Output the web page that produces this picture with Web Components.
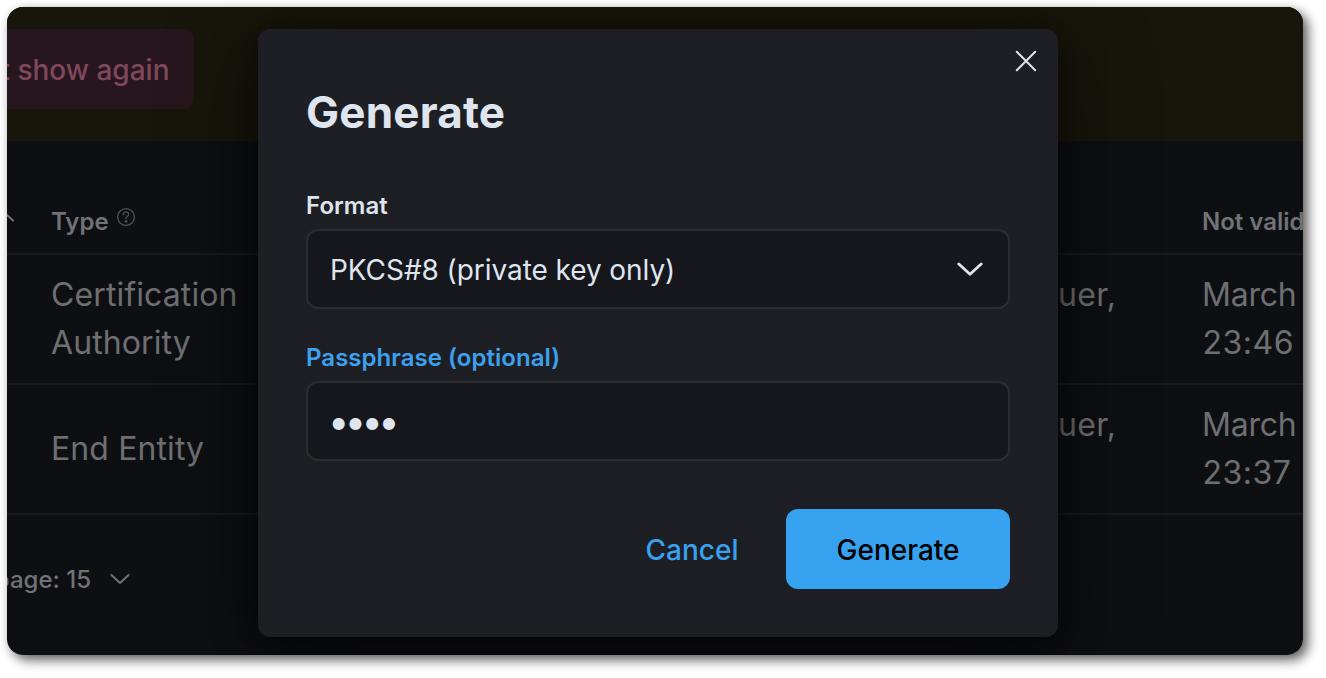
<!DOCTYPE html>
<html lang="en">
<head>
<meta charset="utf-8">
<title>Generate</title>
<style>
body{margin:0;width:1326px;height:678px;overflow:hidden;background:#fff;font-family:Inter,"Liberation Sans",sans-serif}
</style>
</head>
<body>
<app-window>
  <notice-banner>t show again</notice-banner>
  <cert-table></cert-table>
  <page-size>page: 15</page-size>
  <modal-dialog slot="modal" heading="Generate">
    <form-field label="Format"><select-box>PKCS#8 (private key only)</select-box></form-field>
    <form-field label="Passphrase (optional)" active><secret-box>••••</secret-box></form-field>
    <action-button slot="actions" plain>Cancel</action-button>
    <action-button slot="actions">Generate</action-button>
  </modal-dialog>
</app-window>
<script>
function define(name, html) {
  const t = document.createElement('template');
  t.innerHTML = html;
  customElements.define(name, class extends HTMLElement {
    constructor() {
      super();
      this.attachShadow({mode: 'open'}).append(t.content.cloneNode(true));
    }
    connectedCallback() {
      this.shadowRoot.querySelectorAll('[data-attr]').forEach(e => {
        e.textContent = this.getAttribute(e.dataset.attr);
      });
    }
  });
}

define('app-window', `<style>
:host{display:block;padding:7px 0 0 7px}
.frame{position:relative;width:1296px;height:648px;border-radius:16px;box-shadow:5px 5px 12px rgba(0,0,0,.62),0 0 8px rgba(0,0,0,.06)}
.clip{width:100%;height:100%;border-radius:16px;overflow:hidden;background:#0e0f13;display:flex;flex-direction:column;position:relative}
.overlay{position:absolute;left:251px;top:22px}
</style>
<div class="frame"><div class="clip"><slot></slot><div class="overlay"><slot name="modal"></slot></div></div></div>`);

define('notice-banner', `<style>
:host{display:flex;align-items:flex-start;height:134px;box-sizing:border-box;padding-top:22px;background:#18160b}
.btn{display:flex;align-items:center;justify-content:flex-end;width:187px;height:80px;box-sizing:border-box;padding:2px 24.500px 0 0;border-radius:0 10px 10px 0;background:#27161e;color:#80475f;font-size:28px;font-weight:500;white-space:nowrap;overflow:hidden}
</style><div class="btn"><slot></slot></div>`);

define('help-icon', `<style>:host{display:block;width:20px;height:20px}svg{display:block}</style>
<svg width="20" height="20" viewBox="0 0 20 20" fill="none" stroke="#4f5054" stroke-width="1.4" stroke-linecap="round"><circle cx="10" cy="10" r="8.4"/><path d="M7.2 7.500c.1-1.700 1.300-2.600 2.800-2.600 1.500 0 2.700.9 2.700 2.300 0 2-2.700 2-2.700 4.200"/><circle cx="10" cy="14.300" r=".7" fill="#4f5054"/></svg>`);

define('cert-table', `<style>
:host{display:block;color:#6e6f72;font-size:32px;line-height:48px;letter-spacing:.1px}
.row{display:grid;grid-template-columns:44px 1007px 144px 101px;align-items:center;height:128px;border-bottom:2px solid #191a1e;white-space:nowrap}
.head{height:112px;font-size:24px;line-height:36px;font-weight:600;letter-spacing:0;color:#717276}
.type{display:flex;gap:7px}
.head>*{padding-top:50px}
.head help-icon{margin-top:3px}
.top{align-self:start;padding-top:16px;letter-spacing:.35px}
.date{letter-spacing:-.2px}
.time{letter-spacing:.5px;padding-left:.5px}
.sort{align-self:start;padding-top:72px;line-height:0}
</style>
<div class="row head"><svg class="sort" width="8" height="10" viewBox="0 0 8 10" fill="none" stroke="#717276" stroke-width="2" stroke-linecap="round"><path d="M-4 5.600 L0 2 L6 7.600"/></svg><div class="type">Type<help-icon></help-icon></div><div></div><div>Not valid</div></div>
<div class="row"><div></div><div>Certification<br>Authority</div><div class="top">uer,</div><div class="date">March<br><span class="time">23:46</span></div></div>
<div class="row"><div></div><div>End Entity</div><div class="top">uer,</div><div class="date">March<br><span class="time">23:37</span></div></div>`);

define('page-size', `<style>
:host{display:flex;align-items:center;height:128px;color:#717276;font-size:24px;font-weight:500;letter-spacing:0}
.t{width:84px;display:flex;justify-content:flex-end;white-space:nowrap}
svg{margin-left:19px}
</style><div class="t"><slot></slot></div>
<svg width="20" height="12" viewBox="0 0 20 12" fill="none" stroke="#717276" stroke-width="2" stroke-linecap="round" stroke-linejoin="round"><path d="M1.500 2 L10 10 L18.500 2"/></svg>`);

define('modal-dialog', `<style>
:host{display:block;position:relative;box-sizing:border-box;width:800px;height:608px;padding:55px 48px 48px;border-radius:12px;background:#1e1f24;box-shadow:0 16px 96px rgba(0,0,0,.35),0 8px 40px rgba(0,0,0,.6);color:#dfe5ef}
h2{margin:0 0 49px;font-size:44px;line-height:56px;font-weight:700;letter-spacing:.2px}
.fields{display:flex;flex-direction:column;gap:32px}
.actions{display:flex;justify-content:flex-end;margin-top:48px}
.close{position:absolute;right:21px;top:21px}
</style>
<svg class="close" width="22" height="22" viewBox="0 0 22 22" fill="none" stroke="#dfe5ef" stroke-width="2" stroke-linecap="round"><path d="M1.800 1.800 L20.200 20.200 M20.200 1.800 L1.800 20.200"/></svg>
<h2 data-attr="heading"></h2>
<div class="fields"><slot></slot></div>
<div class="actions"><slot name="actions"></slot></div>`);

define('form-field', `<style>
:host{display:block}
label{display:block;height:40px;line-height:34px;font-size:24px;font-weight:600;letter-spacing:.04px}
:host([active]) label{color:#3da1f0}
.box{display:flex;align-items:center;justify-content:space-between;box-sizing:border-box;height:80px;border:2px solid #2c2d31;border-radius:12px;background:#16171c;padding:0 25px 0 22px;font-size:28px}
</style><label data-attr="label"></label><div class="box"><slot></slot></div>`);

define('select-box', `<style>
:host{display:flex;flex:1;align-items:center;justify-content:space-between;letter-spacing:-.07px}
span{padding-top:2px}
</style><span><slot></slot></span>
<svg width="26" height="16" viewBox="0 0 26 16" fill="none" stroke="#dfe5ef" stroke-width="2.800" stroke-linecap="round" stroke-linejoin="round"><path d="M1.800 3 L13 13.300 L24.200 3"/></svg>`);

define('secret-box', `<style>:host{display:block;font-size:38px;line-height:44px;letter-spacing:-4.600px;margin-left:-2px}</style><slot></slot>`);

define('action-button', `<style>
:host{display:flex;align-items:center;justify-content:center;box-sizing:border-box;width:224px;height:80px;padding-top:2px;border-radius:12px;background:#37a2f0;color:#000;font-size:28px;font-weight:500}
:host([plain]){width:188px;background:none;color:#37a2f0}
</style><slot></slot>`);
</script>
</body>
</html>
